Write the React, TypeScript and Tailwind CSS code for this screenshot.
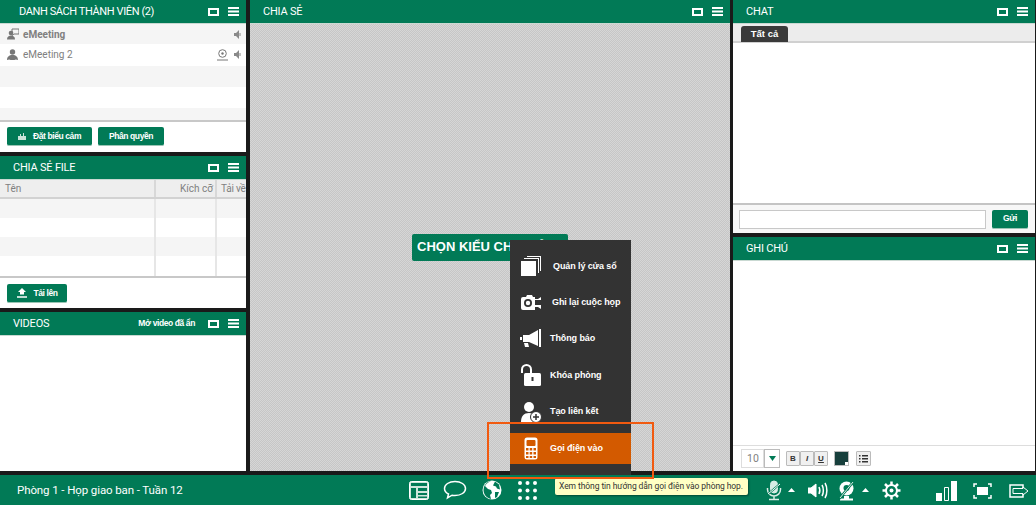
import React from "react";

const Win = () => (
  <svg width="11" height="8" viewBox="0 0 11 8" className="block"><rect x="1" y="1" width="9" height="6" fill="none" stroke="#fff" strokeWidth="2" /></svg>
);
const Burger = () => (
  <svg width="11" height="9" viewBox="0 0 11 9" className="block"><path d="M0 0h11v2H0zM0 3.5h11v2H0zM0 7h11v2H0z" fill="#fff" /></svg>
);

function Header({ title, pad = "pl-[13px]", extra, track = "tracking-[-0.2px]" }: { title: string; pad?: string; extra?: React.ReactNode; track?: string }) {
  return (
    <div className={`h-6 shrink-0 bg-[#017a56] border-b border-[#c9d9d2] flex items-center text-white pr-[7px] ${pad}`}>
      <span className={`text-[11px] pt-[2px] font-['Roboto',sans-serif] grow ${track}`}>{title}</span>
      {extra}
      <Win />
      <span className="w-[9px]" />
      <Burger />
    </div>
  );
}

function GreenBtn({ children, w }: { children: React.ReactNode; w: string }) {
  return (
    <div className={`${w} h-[19px] bg-[#017a56] rounded-[2px] border-b border-[#9bc5b5] text-white font-bold text-[8.500px] tracking-[-0.4px] flex items-center justify-center gap-[5px] font-['Liberation_Sans',sans-serif]`}>
      {children}
    </div>
  );
}

const Speaker = ({ c = "#8a8a8a" }: { c?: string }) => (
  <svg width="8" height="9" viewBox="0 0 8 9"><path d="M0 3h2l3-3v9L2 6H0z" fill={c} /><path d="M6 3v3" stroke={c} /></svg>
);

function Members() {
  return (
    <div className="h-[152px] shrink-0 bg-white flex flex-col">
      <Header title="DANH SÁCH THÀNH VIÊN (2)" pad="pl-[19px]" track="tracking-[-0.4px]" />
      <div className="h-5 bg-[#f5f5f5] flex items-center pl-[6px] pr-[4px] pt-[1px] text-[#808080] text-[10px] font-bold font-['Roboto',sans-serif]">
        <svg width="13" height="13" viewBox="0 0 13 13" className="mr-[4px]">
          <path d="M6 1h7v5H8L6 7.5z" fill="none" stroke="#777" />
          <circle cx="5" cy="5" r="2.3" fill="#777" />
          <path d="M1 11.5c0-3 2-4 4-4s4 1 4 4z" fill="#777" />
        </svg>
        <span className="grow">eMeeting</span>
        <Speaker />
      </div>
      <div className="h-[22px] bg-white flex items-center pl-[6px] pr-[4px] pb-[1px] text-[#808080] text-[10px] font-['Roboto',sans-serif]">
        <svg width="13" height="13" viewBox="0 0 13 13" className="mr-[4px]">
          <circle cx="6.5" cy="4" r="2.7" fill="#777" />
          <path d="M1 12c0-3 2-5 5.5-5S12 9 12 12c-2-1-3-.5-3.500 0H4.500C4 11.500 3 11 1 12z" fill="#777" />
        </svg>
        <span className="grow">eMeeting 2</span>
        <svg width="13" height="12" viewBox="0 0 13 12" className="mr-[5px]">
          <circle cx="6.500" cy="4.500" r="3.800" fill="none" stroke="#777" />
          <circle cx="6.500" cy="4.500" r="1.200" fill="#777" />
          <path d="M1 11h11" stroke="#777" />
        </svg>
        <Speaker />
      </div>
      <div className="h-[21px] bg-[#f5f5f5]" />
      <div className="h-[21px] bg-white" />
      <div className="h-3 bg-[#f5f5f5]" />
      <div className="grow border-t-2 border-[#c8c8c8] flex items-start pt-[5px] pl-[7px] gap-[6px]">
        <GreenBtn w="w-[85px]">
          <svg width="8" height="7" viewBox="0 0 8 7"><path d="M0 3h8v4H0zM2 1h1v2H2zM5 0h1v3H5z" fill="#c9e3d9" /></svg>
          <span className="ml-[2px]">Đặt biểu cảm</span>
        </GreenBtn>
        <GreenBtn w="w-[66px]">Phân quyền</GreenBtn>
      </div>
    </div>
  );
}

function FileRow({ bg, h }: { bg: string; h: string }) {
  return (
    <div className={`${h} ${bg} flex`}>
      <div className="w-[156px] shrink-0 border-r-2 border-[#e6e6e6]" />
      <div className="w-[61px] shrink-0 border-r-2 border-[#e6e6e6]" />
      <div className="grow" />
    </div>
  );
}

function Files() {
  return (
    <div className="h-[152px] shrink-0 bg-white flex flex-col">
      <Header title="CHIA SẺ FILE" />
      <div className="h-[19px] bg-[#eeeeee] border-b-2 border-[#d2d2d2] flex text-[#808080] text-[10px] font-['Roboto',sans-serif] leading-[17px]">
        <div className="w-[156px] shrink-0 border-r-2 border-[#d8d8d8] pl-[5px]">Tên</div>
        <div className="w-[61px] shrink-0 border-r-2 border-[#d8d8d8] text-right pr-[2px]">Kích cỡ</div>
        <div className="w-[29px] shrink-0 pl-[4px] tracking-[-0.2px] whitespace-nowrap">Tải về</div>
      </div>
      <FileRow bg="bg-[#f5f5f5]" h="h-[19px]" />
      <FileRow bg="bg-white" h="h-[19px]" />
      <FileRow bg="bg-[#f5f5f5]" h="h-[19px]" />
      <FileRow bg="bg-white" h="h-[20px]" />
      <div className="grow border-t-2 border-[#c8c8c8] bg-white pt-[6px] pl-[7px]">
        <GreenBtn w="w-[60px]">
          <svg width="12" height="10" viewBox="0 0 12 10"><path d="M6 0l4 4H8v2.500H4V4H2z" fill="#fff" /><path d="M1 9h10" stroke="#fff" strokeWidth="1.500" /></svg>
          Tải lên
        </GreenBtn>
      </div>
    </div>
  );
}

function Videos() {
  return (
    <div className="grow bg-white flex flex-col">
      <Header
        title="VIDEOS"
        extra={<span className="text-[8.500px] tracking-[-0.4px] font-bold mr-[13px] font-['Liberation_Sans',sans-serif]">Mở video đã ẩn</span>}
      />
    </div>
  );
}

function MenuItem({ icon, label, left, h, active }: { icon: React.ReactNode; label: string; left: string; h: string; active?: boolean }) {
  return (
    <div className={`${h} flex items-center relative ${active ? "bg-[#d35a00]" : ""} `}>
      <div className="w-[40px] flex justify-center shrink-0 pl-[1px]">{icon}</div>
      <span className={`${left} pt-[1px] text-white text-[9px] tracking-[-0.1px] font-bold font-['Liberation_Sans',sans-serif] whitespace-nowrap`}>{label}</span>
    </div>
  );
}

function Menu() {
  return (
    <div className="absolute left-[510px] top-[240px] w-[121px] h-[235px] bg-[#333333] flex flex-col pt-[8px]">
      <MenuItem h="h-[36px]" left="ml-[3px]" label="Quản lý cửa sổ" icon={
        <svg width="22" height="22" viewBox="0 0 22 22" fill="#fff"><path d="M7 1h14v15h-1V2H7z" /><path d="M4 3h15v15h-1V4H4z" /><rect x="1" y="6" width="15" height="15" /></svg>
      } />
      <MenuItem h="h-[36px]" left="ml-[2px]" label="Ghi lại cuộc họp" icon={
        <svg width="22" height="17" viewBox="0 0 22 17"><path d="M3 3h3l1-2h5l1 2h2v13H3a2 2 0 0 1-2-2V5a2 2 0 0 1 2-2z" fill="#fff" /><circle cx="8" cy="9" r="4" fill="#333" /><circle cx="8" cy="9" r="2.200" fill="#fff" /><path d="M15 5h3l3-2v3h-6zM15 11h6v4l-3-2h-3z" fill="#fff" /></svg>
      } />
      <MenuItem h="h-[37px]" left="" label="Thông báo" icon={
        <svg width="21" height="19" viewBox="0 0 21 19" fill="#fff"><path d="M19 0h2v18h-2zM18 1v16L9 13H3V6h6z" /><path d="M0 8h2v3H0zM4 14h4l1 4H5z" /></svg>
      } />
      <MenuItem h="h-[36px]" left="" label="Khóa phòng" icon={
        <svg width="21" height="22" viewBox="0 0 21 22"><path d="M2 9V5.500a4.500 4.500 0 0 1 9 0V9" fill="none" stroke="#fff" strokeWidth="2" /><rect x="4" y="9" width="17" height="13" rx="1.500" fill="#fff" /><rect x="11.500" y="13" width="2" height="4" fill="#333" /></svg>
      } />
      <MenuItem h="h-[37px]" left="" label="Tạo liên kết" icon={
        <svg width="22" height="22" viewBox="0 0 22 22"><circle cx="9" cy="6" r="5" fill="#fff" /><path d="M1 21c0-6 3-9 8-9s8 3 8 9z" fill="#fff" /><circle cx="16" cy="16" r="5.500" fill="#fff" stroke="#333" /><path d="M13 16h6M16 13v6" stroke="#333" strokeWidth="1.500" /></svg>
      } />
      <MenuItem h="h-[31px] mt-[3px]" left="" label="Gọi điện vào" active icon={
        <svg width="14" height="23" viewBox="0 0 14 23"><rect x="0.500" y="0.500" width="13" height="22" rx="2.500" fill="#fff" /><rect x="2.500" y="3" width="9" height="6" rx="1" fill="#d35a00" /><path d="M2 11h2.500v2.500H2zM5.700 11h2.500v2.500H5.700zM9.500 11H12v2.500H9.500zM2 15h2.500v2.500H2zM5.700 15h2.500v2.500H5.700zM9.500 15H12v2.500H9.500zM2 19h2.500v2H2zM5.700 19h2.500v2H5.700zM9.500 19H12v2H9.500z" fill="#d35a00" /></svg>
      } />
    </div>
  );
}

function Share() {
  return (
    <div className="w-[480px] flex flex-col">
      <Header title="CHIA SẺ" />
      <div className="grow bg-[repeating-conic-gradient(#c6c6c6_0%_25%,#d6d6d6_0%_50%)] bg-[length:2px_2px] flex items-center justify-center">
        <div className="w-[156px] h-[27px] bg-[#017a56] rounded-[2px] text-white font-bold text-[13px] leading-[26px] pl-[5px] font-['Liberation_Sans',sans-serif] whitespace-nowrap overflow-hidden">
          CHỌN KIỂU CHIA SẺ
        </div>
      </div>
    </div>
  );
}

function Chat() {
  return (
    <div className="h-[233px] shrink-0 bg-white flex flex-col">
      <Header title="CHAT" />
      <div className="h-[19px] bg-[#ececec] border-b-2 border-[#d0d0d0] pl-[8px] pt-[2px]">
        <div className="w-[47px] h-[16px] bg-[#3a3a3a] rounded-t-[3px] text-white font-bold text-[9.500px] text-center leading-[16px] font-['Liberation_Sans',sans-serif]">Tất cả</div>
      </div>
      <div className="grow" />
      <div className="h-[30px] bg-[#f7f7f7] border-t-2 border-[#c4c4c4] flex items-center pl-[6px] pr-[7px] gap-[6px]">
        <div className="w-[247px] h-[19px] bg-white border border-[#c8c8c8]" />
        <GreenBtn w="w-[36px]">Gửi</GreenBtn>
      </div>
    </div>
  );
}

function FmtBtn({ t, cls }: { t: string; cls?: string }) {
  return (
    <div className={`w-[14px] h-[15px] bg-[#f0f0f0] border border-[#bbbbbb] rounded-[1px] text-[8px] font-bold text-[#333] flex items-center justify-center font-['Liberation_Sans',sans-serif] ${cls ?? ""}`}>{t}</div>
  );
}

function Notes() {
  return (
    <div className="grow bg-white flex flex-col">
      <Header title="GHI CHÚ" />
      <div className="grow" />
      <div className="h-[26px] bg-white border-t border-[#dddddd] flex items-center pl-[8px] gap-[6px]">
        <div className="flex">
          <div className="w-[23px] h-[19px] bg-white border border-[#dddddd] text-[#808080] text-[10.500px] pl-[5px] leading-[18px] font-['Roboto',sans-serif]">10</div>
          <div className="w-[16px] h-[19px] bg-white border border-[#bbbbbb] flex items-center justify-center">
            <svg width="7" height="5" viewBox="0 0 7 5"><path d="M0 0h7L3.500 5z" fill="#017a56" /></svg>
          </div>
        </div>
        <div className="flex">
          <FmtBtn t="B" />
          <FmtBtn t="I" cls="italic" />
          <FmtBtn t="U" cls="underline" />
        </div>
        <div className="w-[15px] h-[15px] bg-[#173f3c] border border-[#bbbbbb] relative">
          <div className="absolute right-0 bottom-0 w-[3px] h-[3px] bg-white" />
        </div>
        <div className="w-[15px] h-[15px] bg-[#f0f0f0] border border-[#bbbbbb] rounded-[1px] flex items-center justify-center ml-[1px]">
          <svg width="9" height="9" viewBox="0 0 9 9"><path d="M0 1h1.500v1.500H0zM3 1h6v1.500H3zM0 4h1.500v1.500H0zM3 4h6v1.500H3zM0 7h1.500v1.500H0zM3 7h6v1.500H3z" fill="#333" /></svg>
        </div>
      </div>
    </div>
  );
}

function Footer() {
  return (
    <div className="h-[30px] shrink-0 bg-[#017a56] flex items-center text-white relative">
      <span className="absolute left-[17px] top-[7px] text-[11.500px] tracking-[-0.1px] font-['Roboto',sans-serif]">Phòng 1 - Họp giao ban - Tuần 12</span>
      <div className="ml-[409px] flex items-center">
        <svg width="20" height="19" viewBox="0 0 20 19"><rect x="0.500" y="0.500" width="19" height="18" rx="2" fill="#cfe5dc" stroke="#fff" /><path d="M2 2h16v3H2z" fill="#017a56" /><path d="M2 7h5v10H2zM9 7h9v3H9zM9 12h9v2H9zM9 15.500h9V17H9z" fill="#017a56" /></svg>
        <svg width="24" height="20" viewBox="0 0 24 20" className="ml-[14px]"><path d="M12 1.500c6 0 10.500 3 10.500 7s-4.500 7-10.500 7c-1 0-2 0-3-.3L4.500 18l1-4C3 12.800 1.500 10.800 1.500 8.500c0-4 4.500-7 10.500-7z" fill="none" stroke="#fff" strokeWidth="1.500" /></svg>
        <svg width="20" height="20" viewBox="0 0 20 20" className="ml-[15px]"><circle cx="10" cy="10" r="9.500" fill="#fff" /><path d="M9 1c-3 1-5 3-6 5l3 3 3 1 1 3-2 2 1 4c-3-.5-6-3-7-6C0.500 8 3 2 9 1zM13 1.500l4 3 1 5-3-1-1-2-3-1zM13 12h4l-2 5-2 1z" fill="#017a56" /></svg>
        <svg width="19" height="19" viewBox="0 0 19 19" className="ml-[16px]" fill="#fff">
          {[2, 9.500, 17].map((y) => [2, 9.500, 17].map((x) => <circle key={`${x}-${y}`} cx={x} cy={y} r="2" />))}
        </svg>
      </div>
      <div className="absolute left-[766px] top-[5px] flex items-center">
        <svg width="16" height="21" viewBox="0 0 16 21" fill="none" stroke="#d9ece5"><rect x="4.500" y="1" width="7" height="12" rx="3.500" fill="#d9ece5" /><path d="M1.500 8v1.500a6.500 6.500 0 0 0 13 0V8M8 16v3M3 19.500h10" strokeWidth="1.500" /><path d="M1 15L15 3" stroke="#017a56" strokeWidth="2" /><path d="M2 14L14 4" stroke="#fff" /></svg>
        <svg width="7" height="4" viewBox="0 0 7 4" className="ml-[6px] mb-[1px]"><path d="M0 4l3.500-4L7 4z" fill="#fff" /></svg>
        <svg width="20" height="17" viewBox="0 0 20 17" className="ml-[13px]" fill="none" stroke="#fff"><path d="M0 6h3l5-4v13l-5-4H0z" fill="#fff" /><path d="M11 5c1 2 1 5 0 7M14 3c1.800 3 1.800 8 0 11M17 1c2.500 4 2.500 11 0 15" strokeWidth="1.500" /></svg>
        <svg width="19" height="21" viewBox="0 0 19 21" className="ml-[9px]" fill="none"><circle cx="9.500" cy="8.500" r="7" fill="#fff" /><circle cx="9.500" cy="8" r="3" fill="#017a56" /><path d="M3 19.500h13" stroke="#fff" strokeWidth="2" /><path d="M7 16h5v3H7z" fill="#fff" /><path d="M2 19L17 1" stroke="#017a56" strokeWidth="2.500" /><path d="M3 18L16 2" stroke="#d9ece5" /></svg>
        <svg width="7" height="4" viewBox="0 0 7 4" className="ml-[6px] mb-[1px]"><path d="M0 4l3.500-4L7 4z" fill="#fff" /></svg>
        <svg width="19" height="19" viewBox="0 0 19 19" className="ml-[13px]"><circle cx="9.500" cy="9.500" r="5.500" fill="none" stroke="#fff" strokeWidth="2" /><circle cx="9.500" cy="9.500" r="2" fill="#fff" /><path d="M9.500 0.500v3.500M9.500 15v3.500M0.500 9.500H4M15 9.500h3.500M3 3l2.500 2.500M13.500 13.500L16 16M3 16l2.500-2.500M13.500 5.500L16 3" stroke="#fff" strokeWidth="2.500" /></svg>
        <svg width="21" height="20" viewBox="0 0 21 20" className="ml-[35px]"><path d="M0 12h6v8H0zM15 0h6v20h-6z" fill="#fff" /><path d="M8.500 6.500h4v13h-4z" fill="none" stroke="#fff" /></svg>
        <svg width="19" height="16" viewBox="0 0 19 16" className="ml-[16px]" fill="none" stroke="#fff" strokeWidth="1.500"><path d="M1 4V1h3M15 1h3v3M18 12v3h-3M4 15H1v-3" /><rect x="4" y="4" width="11" height="8" fill="#fff" stroke="none" /></svg>
        <svg width="20" height="14" viewBox="0 0 20 14" className="ml-[17px]" fill="none" stroke="#fff" strokeWidth="1.500"><path d="M14 4V1H1v12h13v-3" /><path d="M4 4.500h10V3l5 4-5 4V9.500H4z" strokeWidth="1" fill="#017a56" /></svg>
      </div>
      <div className="absolute left-[555px] top-[3px] w-[193px] h-[17px] bg-[#ffffc4] rounded-[2px] shadow-[1px_1px_2px_rgba(0,0,0,0.4)] text-[#333] text-[8.500px] tracking-[-0.08px] leading-[17px] pl-[4px] whitespace-nowrap font-['Roboto',sans-serif]">
        Xem thông tin hướng dẫn gọi điện vào phòng họp.
      </div>
    </div>
  );
}

export default function App() {
  return (
    <div className="relative w-[1036px] h-[505px] bg-[#1a1a1a] flex flex-col overflow-hidden">
      <div className="h-[471px] flex shrink-0">
        <div className="w-[246px] flex flex-col gap-[4px] shrink-0">
          <Members />
          <Files />
          <Videos />
        </div>
        <div className="w-1 shrink-0" />
        <Share />
        <div className="w-[3px] shrink-0" />
        <div className="w-[302px] flex flex-col gap-[4px] shrink-0">
          <Chat />
          <Notes />
        </div>
      </div>
      <div className="h-1 shrink-0" />
      <Footer />
      <Menu />
      <div className="absolute left-[487px] top-[422px] w-[167px] h-[57px] border-2 border-[#f15a10]" />
    </div>
  );
}
